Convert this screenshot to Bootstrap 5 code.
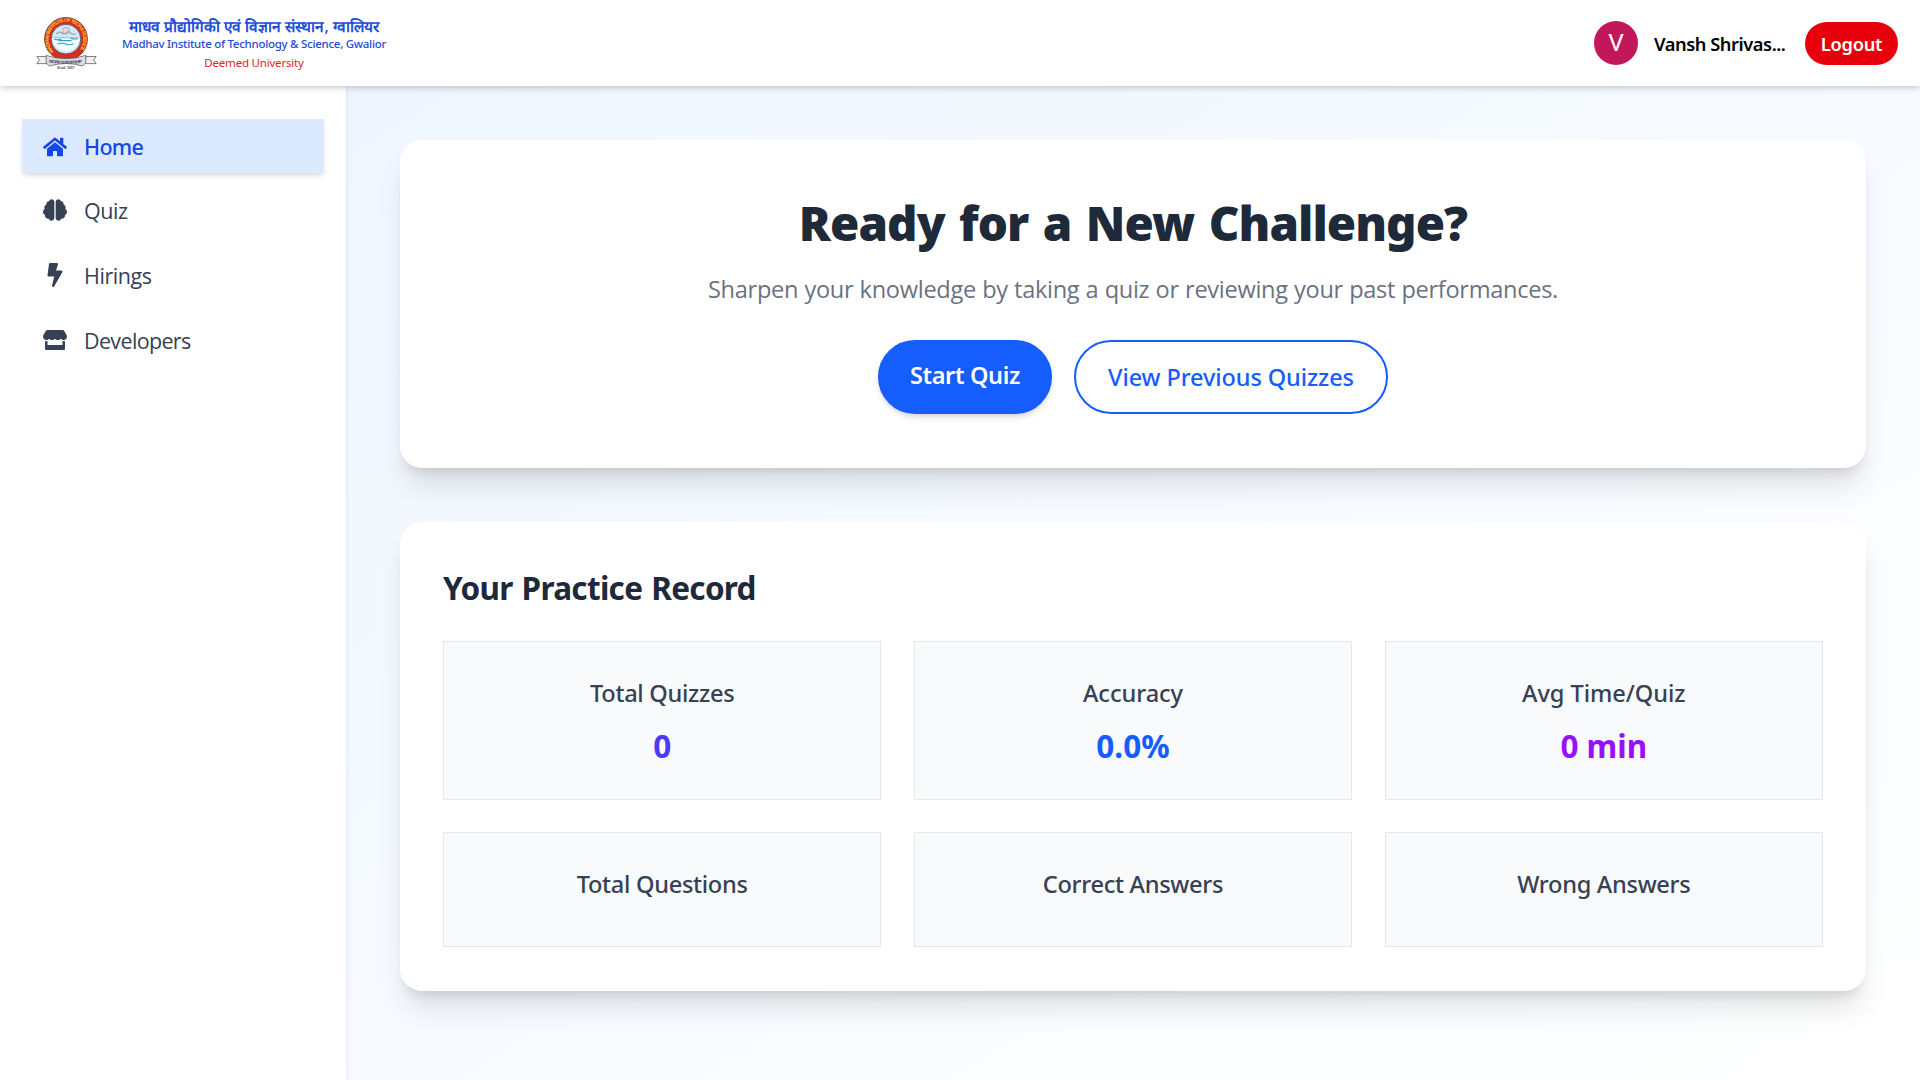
<!DOCTYPE html>
<html lang="en">
<head>
<meta charset="utf-8">
<meta name="viewport" content="width=device-width, initial-scale=1">
<title>MITS Quiz - Home</title>
<link href="https://cdn.jsdelivr.net/npm/bootstrap@5.3.0/dist/css/bootstrap.min.css" rel="stylesheet">
<script src="https://cdn.jsdelivr.net/npm/bootstrap@5.3.0/dist/js/bootstrap.bundle.min.js"></script>
<style>
  body { font-family: "Noto Sans", "Open Sans", sans-serif; background: #fff; height: 100vh; overflow: hidden; }

  /* top bar */
  .topbar { height: 86px; padding: 0 22px 0 36px; z-index: 5;
    box-shadow: 0 4.4px 6.6px -1px rgba(0,0,0,.13), 0 2.2px 4.4px -2px rgba(0,0,0,.12); }
  .brand-text { padding-top: 1px; width: 266px; margin-left: 24px; line-height: 18px; color: #1d4ed8; }
  .brand-hi { font: 600 15.35px/20px "Open Sans", sans-serif; padding-top: 1px; margin-bottom: -1px; }
  .brand-en { font-size: 11.5px; font-weight: 500; letter-spacing: -.28px; line-height: 17px; }
  .brand-sub { font-size: 11.5px; letter-spacing: -.2px; line-height: 19px; color: #dc2626; padding-top: 1px; }
  .avatar { width: 44px; height: 44px; background: #c2185b; font: 400 24.5px/1 Roboto, sans-serif; padding-top: 1px; }
  .user-name { font-size: 18.3px; font-weight: 600; letter-spacing: -.45px; color: #000; width: 151px; padding: 2px 0 0 16px; }
  .btn-logout { background: #e7000b; color: #fff; width: 93px; height: 43px; font-size: 18.3px; font-weight: 600; letter-spacing: -.25px; padding: 2px 0 0; }

  /* side navigation */
  .sidebar { width: 346px; padding: 33px 22px; z-index: 2; box-shadow: 0 0 5px rgba(30,41,90,.12); }
  .side-nav { gap: 10.8px; }
  .side-item { height: 54px; padding: 0 21px; gap: 17px; font: 400 21.5px/1 "Open Sans", sans-serif; color: #364153; letter-spacing: -.45px; text-decoration: none; }
  .side-item.current { background: #dbeafe; color: #1447e6; font: 500 21.5px/1 "Noto Sans", sans-serif; letter-spacing: -.7px; padding-top: 2px;
    box-shadow: 0 4.4px 6.6px -1px rgba(0,0,0,.1), 0 2.2px 4.4px -2px rgba(0,0,0,.1); }
  .side-item svg { width: 24px; height: 24px; fill: currentColor; margin-bottom: 1px; }
  .tighter { letter-spacing: -.65px; }

  /* content */
  .content { padding: 54px; gap: 54px; background: linear-gradient(to bottom right, #eff6ff, #fff); }
  .panel { background: #fff; border-radius: 22px;
    box-shadow: 0 22px 27.5px -5.5px rgba(0,0,0,.11), 0 8.8px 11px -6.6px rgba(0,0,0,.11); }
  .hero { height: 328px; padding-top: 54px; }
  .hero-title { font-size: 47.5px; line-height: 58px; font-weight: 900; letter-spacing: -.95px; word-spacing: 3px; color: #1e2939; }
  .hero-sub { font: 400 23.6px/36px "Open Sans", sans-serif; letter-spacing: -.3px; word-spacing: .4px; color: #6a7282; margin: 19px 0 33px; }
  .hero-actions { gap: 22px; }
  .btn-hero { height: 74px; border: 2px solid #155dfc; border-radius: 37px; font-size: 23.5px; }
  .btn-start { width: 174px; background: #155dfc; color: #fff; font-weight: 600; letter-spacing: -.35px; padding: 0 0 2px;
    box-shadow: 0 4.4px 6.6px -1px rgba(0,0,0,.12), 0 2.2px 4.4px -2px rgba(0,0,0,.1); }
  .btn-view { width: 314px; background: #fff; color: #155dfc; font-weight: 500; letter-spacing: -.1px; padding: 2px 0 0; }
  .record { padding: 43px 43px 44px; }
  .record-title { font-size: 31.5px; line-height: 45px; font-weight: 700; letter-spacing: -.7px; word-spacing: 1.5px; color: #1e2939; margin-bottom: 31px; }
  .tiles { display: grid; grid-template-columns: repeat(3, 1fr); gap: 32px 32.500px; }
  .tile { background: #f9fafb; border: 1px solid #e5e7eb; padding: 33px 0 31px; }
  .tile-label { font-size: 23.6px; line-height: 36px; font-weight: 500; color: #364153; letter-spacing: -.3px; }
  .tile-wide { letter-spacing: -.05px; }
  .tile-value { font-size: 31.5px; line-height: 44px; font-weight: 700; margin-top: 13px; }
  .tile-empty { height: 115px; }
  .c-indigo { color: #4f39f6; } .c-blue { color: #155dfc; } .c-purple { color: #9810fa; }
</style>
</head>
<body class="d-flex flex-column">

<header class="topbar bg-white d-flex align-items-center justify-content-between position-relative flex-shrink-0">
  <div class="d-flex align-items-center">
    <svg width="61" height="53" viewBox="0 0 60 52" role="img" aria-label="MITS emblem">
      <defs><path id="ring" d="M17.5 33.7A17 17 0 1 1 41.5 33.7"/></defs>
      <circle cx="29.5" cy="21.5" r="21.1" fill="#d92a1c" stroke="#5b4348" stroke-width=".8"/>
      <circle cx="29.5" cy="21.7" r="14.6" fill="#d3e8f4" stroke="#4d5a72" stroke-width=".9"/>
      <path d="M16.5 20.5h26a13 13 0 0 1-26 0z" fill="#f3fbfd"/>
      <circle cx="29.5" cy="13.5" r="3.3" fill="#e4dce2" stroke="#8d8c9c" stroke-width=".6"/>
      <path d="M20 16.5q3-3 5-1t4.500 0 4.500 0 5 1" fill="none" stroke="#8c98ab" stroke-width="1"/>
      <path d="M17 20.300h25" stroke="#8faabd" stroke-width=".7"/>
      <path d="M18 21.500q3 1.600 7 0M22 23.200h13M34 20.800q4 1.400 7 .4M21 26.500q5-1.400 8 0t8 0" fill="none" stroke="#2ba3c4" stroke-width="1.100"/>
      <text font-family="Liberation Sans, sans-serif" font-size="5" font-weight="700" fill="#f8c93a"><textPath href="#ring" textLength="77">MADHAV INSTITUTE OF TECH &amp; SCIENCE</textPath></text>
      <path d="M.8 38.800h10l1 7H.8l2.600-3.500zM59.200 38.800h-10l-1 7h11l-2.600-3.500z" fill="#f1f1f3" stroke="#66656c" stroke-width=".8"/>
      <path d="M10 37.700q19.500 6.500 39 0v7.200l-3 3.300q-16.500-5-33 0l-3-3.300z" fill="#dcdbe3" stroke="#66656c" stroke-width=".8"/>
      <path id="motto" d="M12.500 44.700q17 2.600 34 0" fill="none"/>
      <text font-family="Liberation Sans, sans-serif" font-size="4.200" font-weight="700" fill="#3f3a5c"><textPath href="#motto" textLength="33">WORK IS WORSHIP</textPath></text>
      <text x="29.500" y="51" text-anchor="middle" font-family="Liberation Sans, sans-serif" font-size="3.800" font-weight="700" fill="#7a5038" textLength="17">Estd. 1957</text>
    </svg>
    <div class="brand-text text-center text-nowrap">
      <div class="brand-hi" lang="hi">माधव प्रौद्योगिकी एवं विज्ञान संस्थान, ग्वालियर</div>
      <div class="brand-en">Madhav Institute of Technology &amp; Science, Gwalior</div>
      <div class="brand-sub">Deemed University</div>
    </div>
  </div>
  <div class="d-flex align-items-center">
    <div class="avatar rounded-circle text-white d-flex align-items-center justify-content-center">V</div>
    <div class="user-name text-nowrap">Vansh Shrivas...</div>
    <button class="btn btn-logout rounded-pill border-0 ms-3">Logout</button>
  </div>
</header>

<div class="d-flex flex-grow-1">
  <aside class="sidebar bg-white flex-shrink-0 position-relative">
    <nav class="side-nav d-flex flex-column">
      <a class="side-item current d-flex align-items-center" href="#">
        <svg viewBox="0 0 576 512"><path d="M280.37 148.26L96 300.11V464a16 16 0 0 0 16 16l112.06-.29a16 16 0 0 0 15.92-16V368a16 16 0 0 1 16-16h64a16 16 0 0 1 16 16v95.64a16 16 0 0 0 16 16.05L464 480a16 16 0 0 0 16-16V300L295.67 148.26a12.19 12.19 0 0 0-15.3 0zM571.6 251.47L488 182.56V44.05a12 12 0 0 0-12-12h-56a12 12 0 0 0-12 12v72.61L318.47 43a48 48 0 0 0-61 0L4.34 251.47a12 12 0 0 0-1.6 16.9l25.5 31A12 12 0 0 0 45.15 301l235.22-193.74a12.19 12.19 0 0 1 15.3 0L530.9 301a12 12 0 0 0 16.9-1.6l25.5-31a12 12 0 0 0-1.7-16.93z"/></svg>
        <span>Home</span>
      </a>
      <a class="side-item d-flex align-items-center" href="#">
        <svg viewBox="0 0 576 512"><path d="M208 0c-29.9 0-54.7 20.5-61.8 48.2-.8 0-1.4-.2-2.2-.2-35.3 0-64 28.7-64 64 0 4.8.6 9.5 1.7 14C52.5 138 32 166.6 32 200c0 12.6 3.2 24.3 8.3 34.9C16.3 248.7 0 274.3 0 304c0 33.3 20.4 61.9 49.4 73.9-.9 4.6-1.4 9.3-1.4 14.1 0 39.8 32.2 72 72 72 4.1 0 8.1-.5 12-1.2 9.6 28.5 36.2 49.2 68 49.2 39.8 0 72-32.2 72-72V64c0-35.3-28.7-64-64-64zm368 304c0-29.700-16.300-55.300-40.300-69.100 5.200-10.600 8.300-22.300 8.300-34.900 0-33.400-20.500-62-49.700-74 1-4.500 1.700-9.200 1.700-14 0-35.300-28.700-64-64-64-.8 0-1.500.2-2.200.2C422.700 20.500 397.900 0 368 0c-35.300 0-64 28.600-64 64v376c0 39.800 32.200 72 72 72 31.800 0 58.400-20.700 68-49.200 3.900.7 7.900 1.200 12 1.200 39.800 0 72-32.200 72-72 0-4.800-.5-9.500-1.400-14.100 29-12 49.400-40.600 49.400-73.900z"/></svg>
        <span>Quiz</span>
      </a>
      <a class="side-item d-flex align-items-center" href="#">
        <svg viewBox="0 0 320 512"><path d="M296 160H180.600l42.600-129.800C227.200 15 215.700 0 200 0H56C44 0 33.800 8.900 32.200 20.800l-32 240C-1.700 275.200 9.500 288 24 288h118.700L96.600 482.500c-3.600 15.200 8 29.500 23.300 29.500 8.400 0 16.400-4.400 20.800-12l176-304c9.300-15.900-2.200-36-20.700-36z"/></svg>
        <span>Hirings</span>
      </a>
      <a class="side-item d-flex align-items-center" href="#">
        <svg viewBox="0 0 616 512"><path d="M602 118.600L537.100 15C531.300 5.700 521 0 510 0H106C95 0 84.700 5.700 78.900 15L14 118.600c-33.500 53.500-3.800 127.900 58.800 136.400 4.500.6 9.100.9 13.700.9 29.600 0 55.800-13 73.800-33.100 18 20.100 44.300 33.100 73.800 33.100 29.600 0 55.800-13 73.800-33.100 18 20.100 44.300 33.100 73.800 33.100 29.600 0 55.800-13 73.800-33.100 18.100 20.100 44.300 33.100 73.800 33.100 4.700 0 9.200-.3 13.700-.9 62.800-8.400 92.600-82.800 59-136.400zM529.500 288c-10 0-19.900-1.500-29.500-3.800V384H116v-99.800c-9.600 2.200-19.500 3.800-29.500 3.800-6 0-12.100-.4-18-1.200-5.600-.8-11.100-2.100-16.400-3.600V480c0 17.700 14.300 32 32 32h448c17.700 0 32-14.300 32-32V283.200c-5.400 1.600-10.800 2.900-16.400 3.600-6.100.8-12.100 1.200-18.200 1.200z"/></svg>
        <span class="tighter">Developers</span>
      </a>
    </nav>
  </aside>

  <main class="content flex-grow-1 d-flex flex-column">
    <section class="panel hero text-center">
      <h1 class="hero-title m-0">Ready for a New Challenge?</h1>
      <p class="hero-sub">Sharpen your knowledge by taking a quiz or reviewing your past performances.</p>
      <div class="hero-actions d-flex justify-content-center">
        <button class="btn btn-hero btn-start">Start Quiz</button>
        <button class="btn btn-hero btn-view">View Previous Quizzes</button>
      </div>
    </section>

    <section class="panel record">
      <h2 class="record-title">Your Practice Record</h2>
      <div class="tiles text-center">
        <div class="tile"><div class="tile-label">Total Quizzes</div><div class="tile-value c-indigo">0</div></div>
        <div class="tile"><div class="tile-label tile-wide">Accuracy</div><div class="tile-value c-blue">0.0%</div></div>
        <div class="tile"><div class="tile-label tile-wide">Avg Time/Quiz</div><div class="tile-value c-purple">0 min</div></div>
        <div class="tile tile-empty"><div class="tile-label">Total Questions</div></div>
        <div class="tile tile-empty"><div class="tile-label">Correct Answers</div></div>
        <div class="tile tile-empty"><div class="tile-label">Wrong Answers</div></div>
      </div>
    </section>
  </main>
</div>
</body>
</html>
